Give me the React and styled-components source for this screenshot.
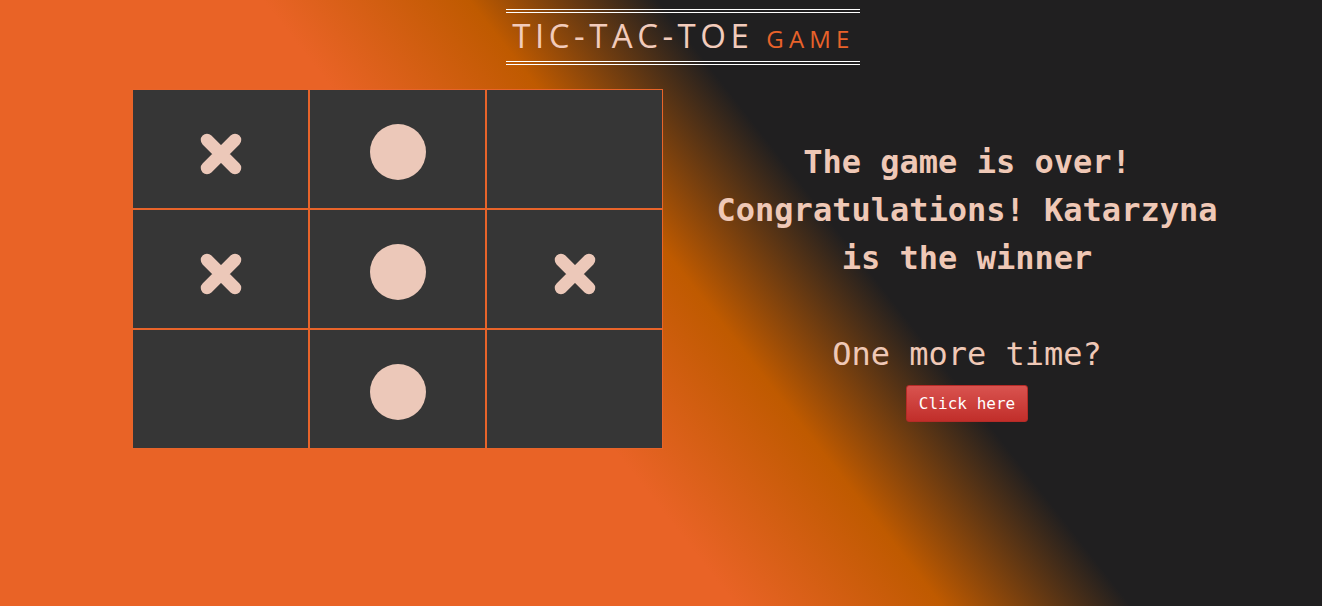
import React, { useState } from "react";
import styled, { createGlobalStyle } from "styled-components";

const GlobalStyle = createGlobalStyle`
  html, body {
    margin: 0;
    padding: 0;
  }
  body {
    min-height: 100vh;
    background: linear-gradient(52deg, #e96326 0%, #e96326 41%, #bf5a00 52.5%, #201f20 63%, #201f20 100%);
    background-attachment: fixed;
  }
`;

const Page = styled.div`
  min-height: 100vh;
  display: flex;
  flex-direction: column;
  align-items: center;
`;

const Header = styled.header`
  padding-top: 9px;
  padding-left: 44px;
  text-align: center;
`;

const Title = styled.h1`
  display: inline-block;
  margin: 0;
  padding: 0 5px 0 6px;
  border-top: 4px double #ffffff;
  border-bottom: 4px double #ffffff;
  font-family: "Open Sans", sans-serif;
  font-weight: 500;
  font-size: 33px;
  line-height: 45px;
  letter-spacing: 4.5px;
  color: #f2cbbb;
`;

const Subtitle = styled.span`
  font-size: 24px;
  letter-spacing: 5.2px;
  color: #e8622a;
  margin-left: 13px;
`;

const Main = styled.main`
  margin-top: 24px;
  align-self: stretch;
  display: flex;
  align-items: flex-start;
  padding-left: 132px;
`;

const Board = styled.div`
  display: grid;
  grid-template-columns: repeat(3, 177px);
  grid-template-rows: repeat(3, 120px);
`;

const Cell = styled.div`
  box-sizing: border-box;
  border: 1px solid #e8642a;
  background: #363636;
  display: flex;
  align-items: center;
  justify-content: center;
  padding-top: ${(p) => (p.mark === "x" ? "10px" : "6px")};
`;

const Circle = styled.div`
  width: 56px;
  height: 56px;
  border-radius: 50%;
  background: #ecc8b9;
`;

const Panel = styled.section`
  width: 520px;
  margin-left: 44px;
  margin-top: 49px;
  text-align: center;
  font-family: "DejaVu Sans Mono", "Liberation Mono", monospace;
  color: #efc8b6;
`;

const Message = styled.p`
  margin: 0;
  font-size: 32px;
  font-weight: 700;
  line-height: 48px;
`;

const Again = styled.p`
  margin: 48px 0 0;
  font-size: 32px;
  line-height: 48px;
`;

const RestartButton = styled.button`
  margin-top: 7px;
  padding: 0 12px;
  height: 37px;
  border: 1px solid #b52b27;
  border-radius: 3px;
  background: linear-gradient(to bottom, #d9534f 0%, #c12e2a 100%);
  color: #ffffff;
  font-family: "DejaVu Sans Mono", "Liberation Mono", monospace;
  font-size: 16px;
  cursor: pointer;
`;

const Cross = () => (
  <svg width="44" height="44" viewBox="0 0 44 44">
    <path
      d="M8 8 L36 36 M36 8 L8 36"
      stroke="#ecc8b9"
      strokeWidth="12.5"
      strokeLinecap="round"
      fill="none"
    />
  </svg>
);

const initial = ["x", "o", "", "x", "o", "x", "", "o", ""];

const App = () => {
  const [cells, setCells] = useState(initial);

  return (
    <>
      <GlobalStyle />
      <Page>
        <Header>
          <Title>
            TIC-TAC-TOE<Subtitle>GAME</Subtitle>
          </Title>
        </Header>
        <Main>
          <Board>
            {cells.map((mark, i) => (
              <Cell key={i} mark={mark}>
                {mark === "x" && <Cross />}
                {mark === "o" && <Circle />}
              </Cell>
            ))}
          </Board>
          <Panel>
            <Message>
              The game is over!
              <br />
              Congratulations! Katarzyna is the winner
            </Message>
            <Again>One more time?</Again>
            <RestartButton onClick={() => setCells(Array(9).fill(""))}>Click here</RestartButton>
          </Panel>
        </Main>
      </Page>
    </>
  );
};

export default App;
